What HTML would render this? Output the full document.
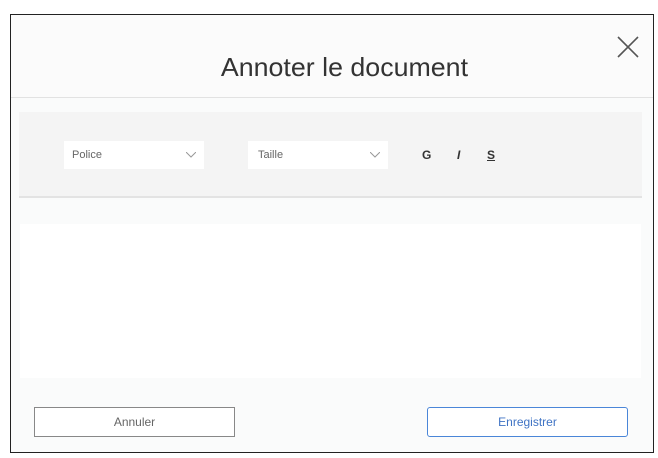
<!DOCTYPE html>
<html><head><style>
*{margin:0;padding:0;box-sizing:border-box}
body{width:658px;height:458px;background:#fff;position:relative;font-family:"Liberation Sans",sans-serif;overflow:hidden}
.m{position:absolute;left:10px;top:14px;width:644px;height:439px;border:1px solid #222;background:#fafbfb}
.abs{position:absolute}
</style></head><body>
<div class="m"></div>
<div class="abs" style="left:11px;top:15px;width:642px;height:83px;background:#fbfbfb;border-bottom:1px solid #e2e2e2"></div>
<div class="abs" style="left:0;width:658px;top:52px;text-align:center;font-size:26px;color:#333;padding-left:30px;transform:scaleX(1.03)">Annoter le document</div>
<svg class="abs" style="left:617px;top:36px" width="22" height="22"><path d="M1 1L21 21M21 1L1 21" stroke="#555" stroke-width="1.6"/></svg>
<div class="abs" style="left:19px;top:112px;width:623px;height:86px;background:#f4f4f4;border-bottom:2px solid #e3e3e3"></div>
<div class="abs" style="left:64px;top:141px;width:140px;height:28px;background:#fff;font-size:11px;color:#666;padding:8px 8px"><span>Police</span><svg class="abs" style="left:122px;top:11px" width="10" height="6"><path d="M0 0L5 5L10 0" fill="none" stroke="#999"/></svg></div>
<div class="abs" style="left:248px;top:141px;width:140px;height:28px;background:#fff;font-size:11px;color:#666;padding:8px 10px"><span>Taille</span><svg class="abs" style="left:122px;top:11px" width="10" height="6"><path d="M0 0L5 5L10 0" fill="none" stroke="#999"/></svg></div>
<div class="abs" style="left:422px;top:148px;font-size:12px;font-weight:bold;color:#333">G</div>
<div class="abs" style="left:457px;top:148px;font-size:12px;font-weight:bold;font-style:italic;color:#333">I</div>
<div class="abs" style="left:487px;top:148px;font-size:12px;font-weight:bold;text-decoration:underline;color:#333">S</div>
<div class="abs" style="left:20px;top:224px;width:621px;height:154px;background:#fff"></div>
<div class="abs" style="left:34px;top:407px;width:201px;height:30px;border:1px solid #888;background:#fff;font-size:12px;color:#666;text-align:center;line-height:28px">Annuler</div>
<div class="abs" style="left:427px;top:407px;width:201px;height:30px;border:1px solid #4a86d8;border-radius:3px;background:#fff;font-size:12px;color:#3f73c4;text-align:center;line-height:28px">Enregistrer</div>
</body></html>
